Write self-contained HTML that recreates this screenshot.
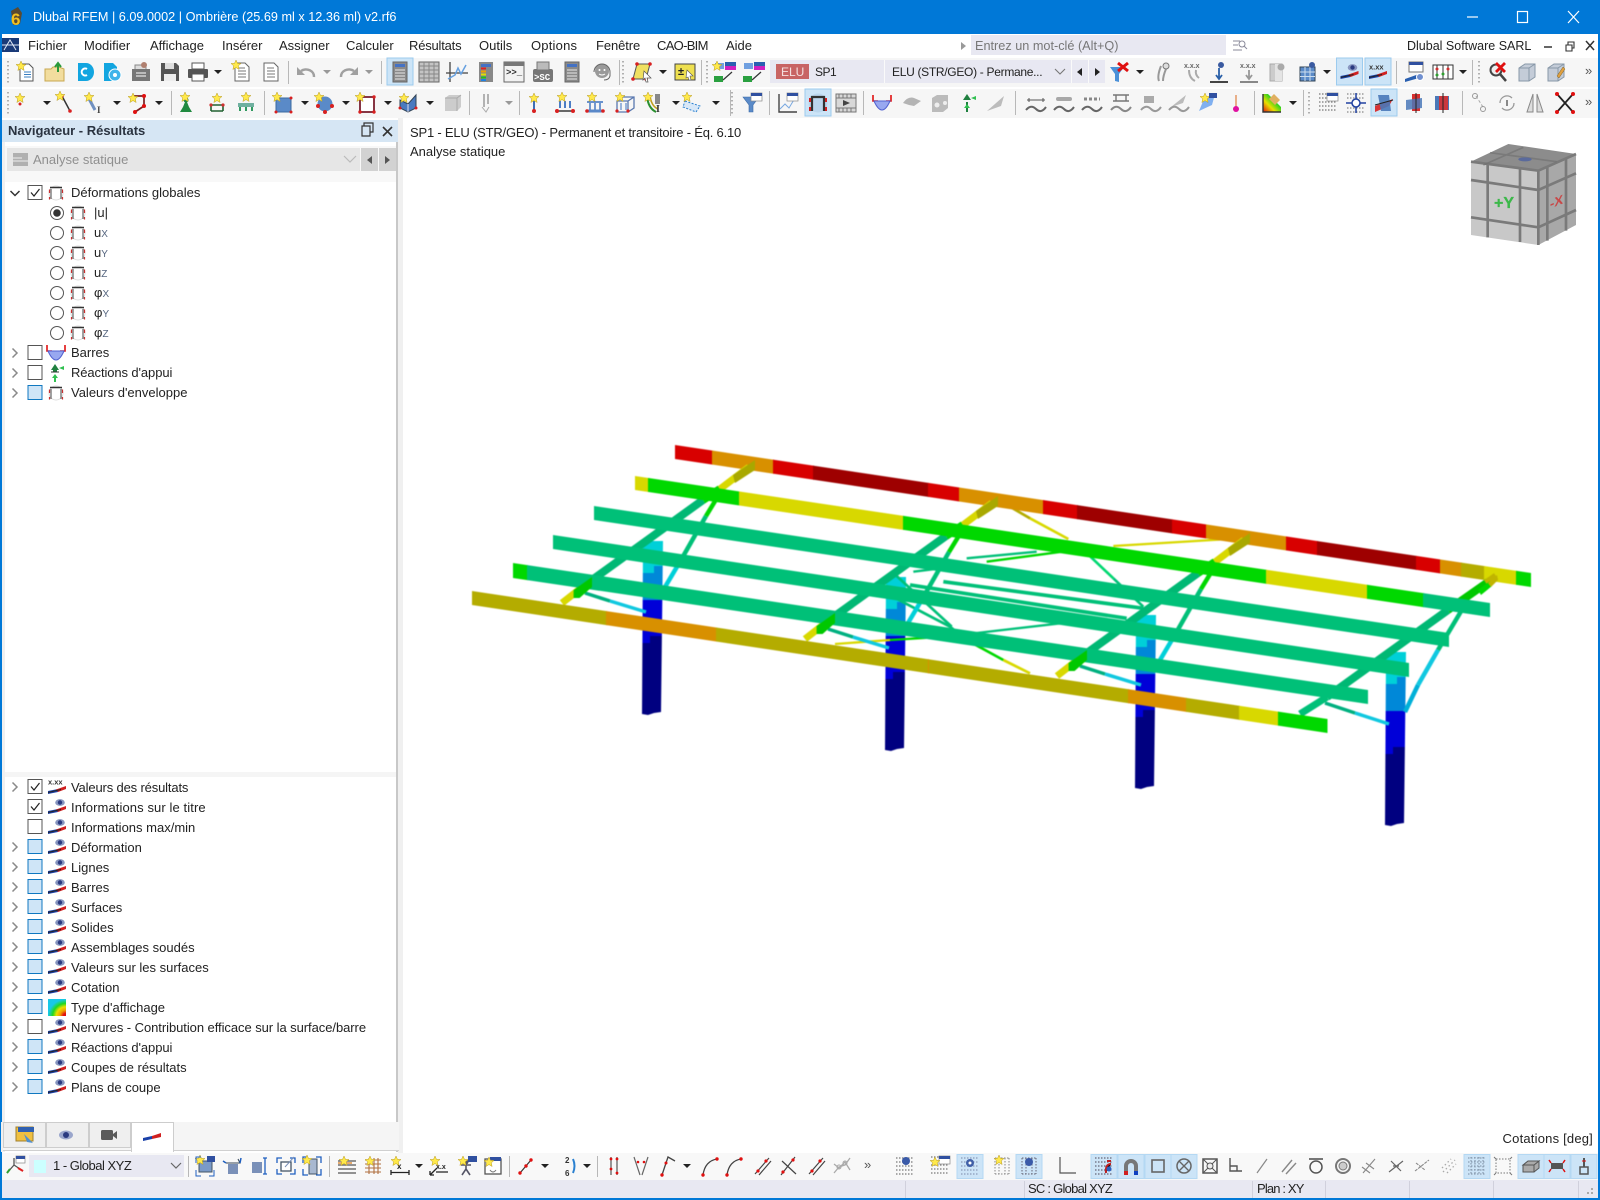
<!DOCTYPE html>
<html lang="fr"><head><meta charset="utf-8"><title>Dlubal RFEM</title>
<style>
html,body{margin:0;padding:0;width:1600px;height:1200px;overflow:hidden;background:#fff}
body{filter:blur(.25px)}
.a{position:absolute}
.t{position:absolute;font:13px/20px "Liberation Sans",sans-serif;color:#222;white-space:nowrap}
small{font-size:10px;color:#55657f}
.s rect{y:400px;height:400px}
</style></head><body>
<div class="a" style="left:0;top:0;width:1600px;height:1200px;background:#fff"></div>
<div class="a" style="left:0;top:0;width:1600px;height:34px;background:#0078d7"></div>
<div class="a" style="left:0;top:34px;width:2px;height:1166px;background:#0078d7"></div>
<div class="a" style="left:1598px;top:34px;width:2px;height:1166px;background:#0078d7"></div>
<div class="a" style="left:0;top:1198px;width:1600px;height:2px;background:#0078d7"></div>
<div class="a" style="left:2px;top:58px;width:1596px;height:29px;background:#f6f6f6"></div>
<div class="a" style="left:2px;top:89px;width:1596px;height:29px;background:#f6f6f6"></div>
<div class="a" style="left:971px;top:35px;width:255px;height:20px;background:#e8e8f2"></div>
<div class="a" style="left:770px;top:60px;width:335px;height:23px;background:#e8e8f2"></div>
<div class="a" style="left:776px;top:64px;width:33px;height:15px;background:#c86464"></div>
<div class="a" style="left:884px;top:60px;width:1px;height:23px;background:#fafafa"></div>
<div class="a" style="left:1071px;top:60px;width:1px;height:23px;background:#fafafa"></div>
<div class="a" style="left:1088px;top:60px;width:1px;height:23px;background:#fafafa"></div>
<!-- left panel -->
<div class="a" style="left:2px;top:120px;width:396px;height:22px;background:#d6e6f4"></div>
<div class="a" style="left:398px;top:118px;width:5px;height:1035px;background:#f0f0f0"></div>
<div class="a" style="left:2px;top:142px;width:3px;height:1010px;background:#f0f0f0"></div>
<div class="a" style="left:396px;top:142px;width:2px;height:1010px;background:#c8c8c8"></div>
<div class="a" style="left:5px;top:146px;width:391px;height:36px;background:#f8f8f8"></div>
<div class="a" style="left:7px;top:148px;width:353px;height:23px;background:#e6e6e6"></div>
<div class="a" style="left:361px;top:148px;width:17px;height:23px;background:#d2d2d2"></div>
<div class="a" style="left:379px;top:148px;width:17px;height:23px;background:#d2d2d2"></div>
<div class="a" style="left:5px;top:772px;width:391px;height:5px;background:#f5f5f5"></div>
<div class="a" style="left:3px;top:1122px;width:396px;height:29px;background:#f5f5f5;border-bottom:1px solid #d0d0d0;box-sizing:border-box"></div>
<div class="a" style="left:3px;top:1122px;width:43px;height:26px;background:#efefef;border:1px solid #cdcdcd;box-sizing:border-box"></div>
<div class="a" style="left:46px;top:1122px;width:43px;height:26px;background:#efefef;border:1px solid #cdcdcd;box-sizing:border-box"></div>
<div class="a" style="left:89px;top:1122px;width:42px;height:26px;background:#efefef;border:1px solid #cdcdcd;box-sizing:border-box"></div>
<div class="a" style="left:131px;top:1122px;width:43px;height:30px;background:#fff;border:1px solid #cdcdcd;border-bottom:0;box-sizing:border-box"></div>
<div class="a" style="left:1px;top:1122px;width:2px;height:30px;background:#f0f0f0"></div>
<!-- bottom -->
<div class="a" style="left:2px;top:1153px;width:1596px;height:27px;background:#f8f8f8"></div>
<div class="a" style="left:29px;top:1155px;width:155px;height:22px;background:#e8e8f2"></div>
<div class="a" style="left:34px;top:1160px;width:12px;height:13px;background:#ccffff"></div>
<div class="a" style="left:2px;top:1180px;width:1596px;height:18px;background:#e8e8f2"></div>

<svg class="a" style="left:0;top:0" width="1600" height="1200" viewBox="0 0 1600 1200" xmlns="http://www.w3.org/2000/svg">
<defs>
<radialGradient id="rain" cx="1" cy="1" r="1.2"><stop offset=".12" stop-color="#e01010"/><stop offset=".28" stop-color="#f0a000"/><stop offset=".45" stop-color="#e8e000"/><stop offset=".62" stop-color="#20d820"/><stop offset=".82" stop-color="#18c8e8"/></radialGradient>
<path id="st" d="M0-5 1.500-1.600 5-1.500 2.300.8 3.100 4.500 0 2.600-3.100 4.500-2.300.8-5-1.500-1.500-1.600z" fill="#ffe94a" stroke="#b89a20" stroke-width=".5"/>
<path id="dn" d="M-4-2H4L0 2z" fill="#222"/>
<path id="dg" d="M-4-2H4L0 2z" fill="#999"/>
<g id="ab"><rect x="-13" y="-14" width="26" height="27" fill="#cce4f7" stroke="#9ccbee"/></g>
<g id="abb"><rect x="-13" y="-12" width="26" height="24" fill="#cce4f7" stroke="#b4d8f3"/></g>
<g id="n1"><path d="M-6-8H3L7-4V9H-6z" fill="#fff" stroke="#555"/><path d="M-2 0H5M-2 2.500H5M-2 5H5" stroke="#3a7fc0"/><use href="#st" x="-5" y="-6"/></g>
<g id="op"><path d="M-10-3H-4L-2-5H4L9-3V9H-10z" fill="#f2dd9e" stroke="#c8a850"/><path d="M3 0V-8M0-5L3-9 6-5" stroke="#2a9a3a" stroke-width="2" fill="none"/></g>
<g id="cc"><path d="M-6-9H2A8 9 0 0 1 2 9H-6z" fill="#12a5e0"/><path d="M3-3A3.500 3.500 0 1 0 3 3" stroke="#fff" stroke-width="2" fill="none"/></g>
<g id="cg"><path d="M-8-9H1L5-5V9H-8z" fill="#12a5e0"/><circle cx="3" cy="3" r="6" fill="#3fb4ea" stroke="#fff"/><circle cx="3" cy="3" r="2" fill="#fff"/></g>
<g id="clp"><rect x="-9" y="-3" width="18" height="12" fill="#777"/><path d="M-6-3V-7H5V-3" fill="#ddd" stroke="#888"/><path d="M-5 1H5M-5 4H5" stroke="#fff"/><circle cx="3" cy="-7" r="3" fill="#b08070"/></g>
<g id="sv"><path d="M-9-9H6L9-6V9H-9z" fill="#555"/><rect x="-5" y="-9" width="9" height="6" fill="#ddd"/><rect x="-6" y="2" width="12" height="7" fill="#eee"/></g>
<g id="pr"><rect x="-6" y="-9" width="12" height="6" fill="#fff" stroke="#555"/><rect x="-10" y="-3" width="20" height="9" rx="1" fill="#555"/><rect x="-6" y="2" width="12" height="7" fill="#fff" stroke="#555"/></g>
<g id="dl"><path d="M-7-9H3L7-5V9H-7z" fill="#fff" stroke="#666"/><path d="M-4-4H3M-4-1H4M-4 2H4M-4 5H4" stroke="#777"/></g>
<g id="ds"><use href="#dl"/><use href="#st" x="-6" y="-7"/></g>
<g id="un"><path d="M8 5A8 7 0 0 0-5-1" stroke="#a0a0a0" stroke-width="2.500" fill="none"/><path d="M-9-5V3H-1z" fill="#a0a0a0"/></g>
<g id="re"><path d="M-8 5A8 7 0 0 1 5-1" stroke="#a0a0a0" stroke-width="2.500" fill="none"/><path d="M9-5V3H1z" fill="#a0a0a0"/></g>
<g id="nv"><rect x="-7" y="-10" width="14" height="20" fill="#8a8a8a" stroke="#666"/><rect x="-5" y="-8" width="10" height="3" fill="#4472c4"/><path d="M-5-2H5M-5 1H5M-5 4H5M-5 7H5" stroke="#e8e8e8"/></g>
<g id="tb"><rect x="-10" y="-10" width="20" height="20" fill="#c4c4c4" stroke="#666"/><path d="M-10-6H10M-10-2H10M-10 2H10M-10 6H10M-5-10V10M0-10V10M5-10V10" stroke="#888"/></g>
<g id="gr"><path d="M-7-10V10M-11 1H11" stroke="#444" stroke-width="1.300" fill="none"/><path d="M-9 7-2 3 1-4 4 2 9-7" stroke="#66a0e0" stroke-width="1.500" fill="none"/></g>
<g id="cl"><rect x="-7" y="-10" width="14" height="20" fill="#888"/><rect x="-5" y="-8" width="10" height="3" fill="#4472c4"/><path d="M-5-3.500H0" stroke="#e02020" stroke-width="2"/><path d="M-5-.5H0" stroke="#f0a000" stroke-width="2"/><path d="M-5 2.500H0" stroke="#e0e000" stroke-width="2"/><path d="M-5 5.500H0" stroke="#20c020" stroke-width="2"/><path d="M-5 8H0" stroke="#2080e0" stroke-width="2"/></g>
<g id="co"><rect x="-10" y="-10" width="20" height="20" fill="#f2f2f2" stroke="#666"/><rect x="-10" y="-10" width="20" height="4" fill="#777"/><text x="-8" y="3" font-family="Liberation Mono" font-size="9" font-weight="700" fill="#333">&gt;&gt;_</text></g>
<g id="sc"><rect x="-10" y="-3" width="20" height="13" rx="2" fill="#777"/><rect x="-6" y="-10" width="12" height="8" fill="#bbb" stroke="#777"/><text x="-9" y="8" font-family="Liberation Mono" font-size="9" font-weight="700" fill="#fff">&gt;SC</text></g>
<g id="hd"><circle cx="0" cy="-1" r="7" fill="#9a9a9a"/><circle cx="-2.500" cy="-2" r="1" fill="#fff"/><circle cx="2.500" cy="-2" r="1" fill="#fff"/><path d="M-3 2Q0 4 3 2" stroke="#fff" fill="none"/><path d="M-8 0A8 8 0 0 1 8 0M8 0V4Q7 8 2 8" stroke="#666" fill="none"/></g>
<g id="pa"><path d="M-6-8H7L3 7H-10z" fill="#f0e060" stroke="#555"/><g fill="#d82020"><circle cx="-6" cy="-8" r="1.800"/><circle cx="7" cy="-8" r="1.800"/><circle cx="3" cy="7" r="1.800"/><circle cx="-10" cy="7" r="1.800"/></g><path d="M1-1 8 6 4 6 5 10 3 10 2 6 0 8z" fill="#fff" stroke="#555" stroke-width=".7"/></g>
<g id="pm"><rect x="-10" y="-8" width="20" height="16" fill="#eee050" stroke="#444"/><text x="-7" y="3" font-family="Liberation Sans" font-size="11" font-weight="700" fill="#222">±</text><path d="M2-2 8 4H5L6 8 4 8 3 5 1 6z" fill="#fff" stroke="#555" stroke-width=".6"/></g>
<g id="c1"><rect x="-11" y="4" width="9" height="6" fill="#2aa040"/><rect x="0" y="-9" width="11" height="7" fill="#d020c0"/><rect x="0" y="-10" width="11" height="4" fill="#2a60b0"/><rect x="-10" y="-9" width="9" height="6" fill="#70a0e0"/><path d="M-2 8 7 0" stroke="#333" stroke-width="1.200"/><use href="#st" x="-8" y="-6"/></g>
<g id="c2"><rect x="-11" y="4" width="9" height="6" fill="#2aa040"/><rect x="0" y="-9" width="11" height="7" fill="#d020c0"/><rect x="0" y="-10" width="11" height="4" fill="#2a60b0"/><rect x="-10" y="-9" width="9" height="6" fill="#70a0e0"/><path d="M-2 8 7 0" stroke="#333" stroke-width="1.200"/></g>
<g id="fu"><path d="M-9-6H7L1 2V9L-3 9V2z" fill="#5a8ac8" stroke="#3a6aa8" stroke-width=".6"/><rect x="-1" y="-10" width="11" height="8" fill="#fff" stroke="#888" stroke-width=".7"/><rect x="-1" y="-10" width="11" height="3" fill="#3050a0"/></g>
<g id="fx"><path d="M-9-5H5L0 2V10L-4 9V2z" fill="#4a90d8"/><path d="M-1-9 9-1M9-9-1-1" stroke="#e01010" stroke-width="3"/></g>
<g id="gp"><path d="M-2-6 Q-6 4-4 9M3-3 Q0 4 0 9" stroke="#999" stroke-width="2" fill="none"/><circle cx="3" cy="-6" r="3" fill="#ddd" stroke="#777"/></g>
<g id="gx"><text x="-9" y="-4" font-family="Liberation Sans" font-size="7" font-weight="700" fill="#666">x.x.x</text><path d="M-4-2Q-4 6 2 9M3-2Q2 3 6 6" stroke="#aaa" stroke-width="2" fill="none"/></g>
<g id="la"><path d="M0-4V7M-3 3 0 7 3 3" stroke="#2a60a8" stroke-width="1.800" fill="none"/><path d="M-9 10H9" stroke="#444" stroke-width="2"/><circle cx="2" cy="-7" r="3" fill="#3a5aa0"/></g>
<g id="lx"><text x="-9" y="-4" font-family="Liberation Sans" font-size="7" font-weight="700" fill="#666">x.x.x</text><path d="M0-2V7M-3 3 0 7 3 3" stroke="#999" stroke-width="1.800" fill="none"/><path d="M-9 10H9" stroke="#888" stroke-width="2"/></g>
<g id="cy"><rect x="-7" y="-8" width="12" height="17" fill="#ccc" stroke="#aaa"/><rect x="-2" y="-8" width="7" height="17" fill="#e4e4e4"/><circle cx="4" cy="-5" r="3.500" fill="#aaa"/></g>
<g id="gb"><rect x="-8" y="-5" width="15" height="14" fill="#5a8ac8" stroke="#345"/><path d="M-8 0H7M-8 4.500H7M-3-5V9M2-5V9" stroke="#cde"/><circle cx="4" cy="-7" r="3" fill="#3a5aa0"/></g>
<g id="ey"><path d="M-9 4-9 7 1 5 1 2z" fill="#1a40a8"/><path d="M-1 2.500 1 5 9 2 9-1z" fill="#d02020"/><path d="M-9 5.500 4 2.500" stroke="#222" stroke-width=".9"/><ellipse cx="3" cy="-4.500" rx="4.800" ry="3.400" fill="#8896c0"/><circle cx="3" cy="-4.500" r="2.200" fill="#2a3a80"/></g>
<g id="xx"><path d="M-9 4-9 7 1 5 1 2z" fill="#1a40a8"/><path d="M-1 2.500 1 5 9 2 9-1z" fill="#d02020"/><path d="M-9 5.500 4 2.500" stroke="#222" stroke-width=".9"/><text x="-9" y="-2.500" font-family="Liberation Sans" font-size="7.500" font-weight="700" fill="#333">x.xx</text></g>
<g id="gw"><rect x="-6" y="-10" width="14" height="10" fill="#fff" stroke="#777"/><rect x="-6" y="-10" width="14" height="3" fill="#3050a0"/><path d="M-10 7 4 2V6L-10 10z" fill="#2a60b0"/><circle cx="5" cy="5" r="3.500" fill="#7090d0" stroke="#fff"/></g>
<g id="ac"><rect x="-10" y="-7" width="20" height="14" fill="#fff" stroke="#333"/><path d="M-6-7V7M0-7V7M5-7V7" stroke="#333"/><g fill="#d03030"><circle cx="-6" cy="-3" r="1.500"/><circle cx="5" cy="-3" r="1.500"/></g><g fill="#30a030"><circle cx="0" cy="2" r="1.500"/><circle cx="-6" cy="3" r="1.500"/></g></g>
<g id="mg"><circle cx="-2" cy="-2" r="5.500" fill="#eee" stroke="#444" stroke-width="2"/><path d="M2 2 8 9" stroke="#444" stroke-width="2.500"/><path d="M-2-9 7 0M7-9-2 0" stroke="#e01010" stroke-width="2.800"/></g>
<g id="cb"><path d="M-8-4-2-8H8V5L2 9H-8z" fill="#c4ccd8" stroke="#8898a8"/><path d="M-8-4H2V9M2-4 8-8" stroke="#8898a8" fill="none"/></g>
<g id="cp"><use href="#cb"/><path d="M1 4 7-5 9-3 3 6z" fill="#e0a040" stroke="#806020" stroke-width=".5"/></g>
<g id="sl"><path d="M-4-7 4 8" stroke="#333" stroke-width="1.500"/><circle cx="4" cy="8" r="1.800" fill="#d82020"/><circle cx="-4" cy="-7" r="1.800" fill="#d82020"/><use href="#st" x="-6" y="-7"/></g>
<g id="sn"><use href="#st" x="-2" y="-5"/><circle cx="-2" cy="1" r="1.500" fill="#d82020"/></g>
<g id="sb"><path d="M-7-8 1 7" stroke="#7090c0" stroke-width="3"/><use href="#st" x="-5" y="-6"/><text x="3" y="10" font-family="Liberation Serif" font-size="9" font-weight="700" fill="#444">I</text></g>
<g id="po"><path d="M-5-7H6V3L-3 9" stroke="#7a2020" stroke-width="1.700" fill="none"/><g fill="#e01010"><circle cx="6" cy="-7" r="2"/><circle cx="6" cy="3" r="2"/><circle cx="-3" cy="9" r="2"/></g><use href="#st" x="-5" y="-5"/></g>
<g id="ng"><path d="M-6 9H6L3 4 1-1H-1L-3 4z" fill="#208a40"/><circle cx="0" cy="-3" r="2.500" fill="#208a40"/><use href="#st" x="-1" y="-6"/></g>
<g id="ns"><path d="M-7 2H7M-6 2V8M6 2V8M-6 8H6" stroke="#206030" stroke-width="1.600" fill="none"/><g fill="#d03030"><circle cx="-6" cy="2" r="1.600"/><circle cx="6" cy="2" r="1.600"/></g><use href="#st" x="0" y="-5"/></g>
<g id="nt"><path d="M-8 0H8V4H-8z" fill="#70b0a0"/><path d="M-6 4V8M0 4V8M6 4V8" stroke="#309a60" stroke-width="2"/><use href="#st" x="0" y="-6"/></g>
<g id="bs"><rect x="-7" y="-5" width="15" height="14" fill="#5a8ac8" stroke="#3a6aa0"/><use href="#st" x="-6" y="-6"/><g fill="#d82020"><circle cx="8" cy="-5" r="1.500"/><circle cx="8" cy="9" r="1.500"/><circle cx="-7" cy="9" r="1.500"/></g></g>
<g id="bl"><circle cx="1" cy="1" r="7.500" fill="#5a8ac8"/><use href="#st" x="-5" y="-6"/><g fill="#d82020"><circle cx="-6" cy="3" r="2"/><circle cx="8" cy="3" r="2"/><circle cx="1" cy="9" r="2"/></g></g>
<g id="bx"><rect x="-6" y="-6" width="14" height="15" fill="#fff" stroke="#7a2030" stroke-width="1.800"/><use href="#st" x="-6" y="-6"/><g fill="#d82020"><circle cx="8" cy="-6" r="1.700"/><circle cx="8" cy="9" r="1.700"/><circle cx="-6" cy="9" r="1.700"/></g></g>
<g id="bk"><path d="M-8-3 0 1 8-8V5L0 9-8 5z" fill="#4a7ac0" stroke="#345"/><path d="M0 1V9" stroke="#dde"/><use href="#st" x="-4" y="-5"/><circle cx="8" cy="5" r="1.500" fill="#d82020"/><circle cx="-8" cy="5" r="1.500" fill="#d82020"/></g>
<g id="gc"><path d="M-7-5V8H5L9 4V-8H-3z" fill="#ccc"/><path d="M-7-5H5V8M5-5 9-8" stroke="#aaa" fill="none"/></g>
<g id="gl"><path d="M-1-9V4M3-9V1" stroke="#aaa" stroke-width="1.800"/><path d="M-3 4 1 9 4 4" stroke="#aaa" fill="none"/></g>
<g id="sp"><path d="M0-2V8" stroke="#2a60b0" stroke-width="1.800"/><use href="#st" x="0" y="-5"/><circle cx="0" cy="8" r="2" fill="#d82020"/></g>
<g id="ld"><path d="M-5-2V5M0-2V5M5-2V5" stroke="#3a70c0" stroke-width="1.800"/><path d="M-8 8H8" stroke="#444" stroke-width="1.600"/><circle cx="-8" cy="8" r="2" fill="#d82020"/><circle cx="8" cy="8" r="2" fill="#d82020"/><use href="#st" x="-3" y="-6"/></g>
<g id="lf"><path d="M-8-1H8M-5 0V7M0 0V7M5 0V7" stroke="#3a70c0" stroke-width="1.400"/><path d="M-9 8H9" stroke="#5a88c8" stroke-width="3"/><circle cx="-8" cy="8" r="1.800" fill="#d82020"/><circle cx="8" cy="8" r="1.800" fill="#d82020"/><use href="#st" x="-3" y="-6"/></g>
<g id="l3"><path d="M-8 8V-2L-2-6H9V5L3 9H-8zM-8-2H3V9M3-2 9-6" stroke="#5a78b0" fill="none" stroke-width="1.300"/><path d="M-4 0V7M1 0V7" stroke="#3a70c0"/><use href="#st" x="-5" y="-6"/><circle cx="-8" cy="8" r="1.600" fill="#d82020"/><circle cx="3" cy="8" r="1.600" fill="#d82020"/></g>
<g id="ci"><path d="M-6-7Q-5 5 3 9" stroke="#2a9030" stroke-width="2" fill="none"/><path d="M-3-8Q-2 3 5 6" stroke="#c0a020" stroke-width="1.500" fill="none"/><text x="3" y="9" font-family="Liberation Serif" font-size="10" font-weight="700" fill="#333">I</text><use href="#st" x="-5" y="-6"/><rect x="2" y="-9" width="5" height="10" fill="#888"/></g>
<g id="dq"><path d="M-6-2 9 3 5 9-8 4z" fill="#d8e8f8" stroke="#2a80d0" stroke-dasharray="2 1.500"/><use href="#st" x="-4" y="-6"/></g>
<g id="gw2"><path d="M-9-9V9H9" stroke="#444" stroke-width="1.400" fill="none"/><path d="M-8 6-3 1 1 5 7-5" stroke="#78a8e0" fill="none"/><rect x="-1" y="-10" width="11" height="8" fill="#fff" stroke="#888" stroke-width=".7"/><rect x="-1" y="-10" width="11" height="3" fill="#3050a0"/></g>
<g id="fr"><circle r="7" fill="none" stroke="#ddd" stroke-width="1"/><path d="M-5 6V-4M5 6V-4" fill="none" stroke="#555" stroke-width="1.100"/><path d="M-6.500-3.500V0M6.500-3.500V0M-6.500 4V6.500M6.500 4V6.500" stroke="#c83030" stroke-width="1.200"/><path d="M-6-5.500H6" stroke="#333" stroke-width="1.500"/></g>
<g id="fa"><circle cx="0" cy="0" r="9.500" fill="#b4d0e8" opacity=".7"/><path d="M-6 8V-6H6V8" fill="none" stroke="#333" stroke-width="2.200"/><path d="M-8-5V-1M8-5V-1M-8 4V8M8 4V8" stroke="#d02020" stroke-width="2"/></g>
<g id="fm"><rect x="-10" y="-9" width="20" height="18" fill="#d8d8d8" stroke="#777"/><path d="M-10-5H10M-10 5H10M-7-9V-5M-3-9V-5M1-9V-5M5-9V-5M-7 5V9M-3 5V9M1 5V9M5 5V9" stroke="#777"/><path d="M-3-3 4 0-3 3z" fill="#444"/></g>
<g id="br"><path d="M-9-8V-2H-4M9-8V-2H4" stroke="#e01010" stroke-width="1.600" fill="none"/><path d="M-8-2Q0 16 8-2z" fill="#98a8f0" stroke="#5060d0"/></g>
<g id="rc"><path d="M-1-9-5-3H-3V-1H1V-3H3z" fill="#208040"/><path d="M-1 1 -4 5H-2V9H0V5H2z" fill="#30c050"/><path d="M8-7 3-5 8-3z" fill="#30c050"/><path d="M-5-1H3" stroke="#333"/></g>
<g id="gb2"><path d="M-9 0Q-4-7 2-5L9-2 2 3Q-4 2-9 0z" fill="#b4b4b4"/></g>
<g id="gd"><path d="M-8-5-3-8H8V5L3 9H-8z" fill="#bbb"/><circle cx="-3" cy="2" r="2.500" fill="#eee"/><circle cx="5" cy="0" r="2" fill="#eee"/></g>
<g id="rc2"><path d="M-1-9-5-3H3z" fill="#208040"/><path d="M-1-1-1 9" stroke="#208040" stroke-width="2"/><path d="M-4 5-1 1 2 5z" fill="#30c050"/><path d="M8-7 3-5 8-3z" fill="#30c050"/></g>
<g id="gy"><path d="M-9 8 8-7 5 3z" fill="#bcbcbc"/></g>
<g id="w1"><path d="M-9-3H9" stroke="#555"/><path d="M-7-5V-1M7-5V-1" stroke="#555"/><path d="M-10 7Q-5 1 0 6T10 4" stroke="#666" stroke-width="2" fill="none"/></g>
<g id="w2"><rect x="-8" y="-6" width="16" height="4" rx="2" fill="#a8a8a8"/><path d="M-10 7Q-5 1 0 6T10 4" stroke="#666" stroke-width="2" fill="none"/></g>
<g id="w3"><path d="M-8-4H8" stroke="#888" stroke-width="3" stroke-dasharray="3 2"/><path d="M-10 7Q-5 1 0 6T10 4" stroke="#666" stroke-width="2" fill="none"/></g>
<g id="w4"><path d="M-8-8H8M-5-8V-2M5-8V-2M-8-2H8" stroke="#777" stroke-width="1.400" fill="none"/><path d="M-10 7Q-5 1 0 6T10 4" stroke="#888" stroke-width="2" fill="none"/></g>
<g id="w5"><path d="M-7-7H3V0H-7z" fill="#aaa"/><path d="M-10 7Q-5 1 0 6T10 4" stroke="#999" stroke-width="2" fill="none"/></g>
<g id="w6"><path d="M-8 4 7-8 4 0z" fill="#bbb"/><path d="M-10 7Q-5 1 0 6T10 4" stroke="#999" stroke-width="2" fill="none"/></g>
<g id="sw"><path d="M-8 8-3-4 8-9 5 2z" fill="#80b0f0"/><use href="#st" x="-2" y="-5"/><rect x="2" y="-10" width="8" height="5" fill="#3050a0"/></g>
<g id="pn"><path d="M0-8V5" stroke="#e08040" stroke-width="1.200"/><circle cx="0" cy="6" r="3" fill="#e010a0"/></g>
<g id="ra"><path d="M-9-9H-4L9 4V9H-9z" fill="url(#rain2)"/><path d="M-9-9V9H9" stroke="#333" stroke-width="1.400" fill="none"/><path d="M2-9 8-3 3 2-3-4z" fill="#e0b060"/></g>
<linearGradient id="rain2" x1="0" y1="1" x2="1" y2="0"><stop offset="0" stop-color="#e01010"/><stop offset=".35" stop-color="#e8e000"/><stop offset=".65" stop-color="#20d020"/><stop offset="1" stop-color="#18c8e8"/></linearGradient>
<g id="dg1"><path d="M-9-9H9M-9-5H9M-9-1H9M-9 3H9M-9 7H9" stroke="#777" stroke-width="1.300" stroke-dasharray="1.500 1.500"/><rect x="-1" y="-10" width="11" height="8" fill="#fff" stroke="#888" stroke-width=".7"/><rect x="-1" y="-10" width="11" height="3" fill="#3050a0"/></g>
<g id="tg"><path d="M-9-9H9M-9-5H9M-9 5H9M-9 9H9" stroke="#888" stroke-width="1.300" stroke-dasharray="1.500 1.500"/><path d="M0-10V10M-10 0H10" stroke="#2040a0" stroke-width="1.500"/><circle r="4" fill="#fff" stroke="#2040a0" stroke-width="1.500"/></g>
<g id="p1"><path d="M-9 3 9-4 5 3-9 9z" fill="#d82020" opacity=".9"/><path d="M-6-8 5-8 7 8-3 8z" fill="#4a78b8" opacity=".9"/><path d="M-9 2 9-3" stroke="#222"/></g>
<g id="p2"><path d="M-2-9H6V8H-2z" fill="#d83030"/><path d="M-8-3 8-5 8 5-8 7z" fill="#4a78b8" opacity=".85"/><path d="M2-10V10" stroke="#222"/></g>
<g id="p3"><rect x="-8" y="-7" width="14" height="14" fill="#4a78b8"/><rect x="-4" y="-7" width="9" height="14" fill="#d83030" opacity=".9"/><path d="M0-10V10" stroke="#222"/></g>
<g id="gn"><path d="M-3-7 4 4" stroke="#aaa" stroke-dasharray="3 2"/><circle cx="-4" cy="-7" r="2.500" fill="none" stroke="#999"/><circle cx="4" cy="6" r="2.500" fill="none" stroke="#999"/></g>
<g id="gr2"><path d="M-7 0A7 7 0 0 1 5-5M7 0A7 7 0 0 1-5 5" stroke="#999" fill="none" stroke-width="1.300"/><rect x="-1" y="-3" width="2" height="6" fill="#888"/></g>
<g id="gt"><path d="M-2-9-8 9H-2zM2-9 8 9H2z" fill="#ddd" stroke="#888"/></g>
<g id="xr"><path d="M-8-9 8 9M8-9-8 9" stroke="#222" stroke-width="1.800"/><g fill="#e01010"><circle cx="-8" cy="-9" r="2"/><circle cx="8" cy="-9" r="2"/><circle cx="-8" cy="9" r="2"/><circle cx="8" cy="9" r="2"/></g></g>
<g id="ax"><path d="M-1-1-8 7M-1-1 8 5M-1-1-1-8" stroke="#555" stroke-width="1.300"/><path d="M-8 7-5 3" stroke="#30a030" stroke-width="2"/><path d="M8 5 3 2" stroke="#e02020" stroke-width="2"/><rect x="1" y="-10" width="9" height="7" fill="#fff" stroke="#888" stroke-width=".7"/><rect x="1" y="-10" width="9" height="3" fill="#3050a0"/></g>
<g id="q1"><rect x="-6" y="-5" width="13" height="11" fill="#7a9ac8" stroke="#456"/><rect x="2" y="-10" width="8" height="6" fill="#3050a0"/><use href="#st" x="-5" y="-6"/><path d="M-9-3V-9H-4M-9 4V10H-4M9 4V10H4" stroke="#2060c0" fill="none"/></g>
<g id="q2"><path d="M-4-2H6V8H-4z" fill="#7a90b8"/><path d="M-6-3H8L6-7" stroke="#345" fill="none"/><path d="M-9-5-6-3M9-8 8-3" stroke="#2060c0" stroke-width="1.500"/></g>
<g id="q3"><path d="M-6-4H4V7H-6z" fill="#7a90b8"/><path d="M7-8V8M5-8H9M5 8H9" stroke="#2060c0" stroke-width="1.300"/></g>
<g id="q4"><rect x="-5" y="-4" width="10" height="9" fill="#fff" stroke="#456" stroke-width="1.300"/><path d="M-9-3V-8H-4M4-8H9V-3M-9 3V8H-4M9 3V8H4" stroke="#2060c0" stroke-width="1.300" fill="none"/><path d="M-1 1 8-9" stroke="#7a90b8"/></g>
<g id="q5"><rect x="-3" y="-7" width="8" height="15" fill="#a8b8d0" stroke="#456"/><path d="M-9-3V-9H-4M4-9H9V-3M-9 3V9H-4M9 3V9H4" stroke="#2060c0" stroke-width="1.300" fill="none"/><use href="#st" x="-5" y="-6"/></g>
<g id="h1"><path d="M-9-5H9M-9-1H9M-9 3H9M-9 7H9" stroke="#555" stroke-width="1.300"/><path d="M-9-3H5" stroke="#e09040" stroke-width="1.500"/><use href="#st" x="-3" y="-5"/></g>
<g id="h2"><path d="M-8-6H8M-8-2H8M-8 2H8M-8 6H8M-4-8V8M1-8V8M5-8V8" stroke="#b07040" stroke-width="1.100"/><use href="#st" x="-3" y="-5"/></g>
<g id="h3"><path d="M-9 4V9M9 4V9M-9 6.500H9" stroke="#222" stroke-width="1.300"/><text x="-3" y="3" font-family="Liberation Sans" font-size="8" font-weight="700" fill="#222">x</text><use href="#st" x="-4" y="-5"/></g>
<g id="h4"><path d="M-9 9 -2 2M-9 9V5M-9 9H-5M-3 6H9" stroke="#222" stroke-width="1.300" fill="none"/><text x="-3" y="3" font-family="Liberation Sans" font-size="7" font-weight="700" fill="#222">x.x</text><use href="#st" x="-4" y="-5"/></g>
<g id="h5"><circle cx="-1" cy="-4" r="2.500" fill="#556"/><path d="M-1-2V3L-5 9M-1 3 3 9M-6-1H4" stroke="#556" stroke-width="1.600" fill="none"/><use href="#st" x="-4" y="-5"/><rect x="1" y="-10" width="9" height="6" fill="#3050a0"/></g>
<g id="h6"><rect x="-8" y="-7" width="16" height="15" fill="#fff" stroke="#555" stroke-width="1.300"/><rect x="-3" y="-9" width="11" height="4" fill="#3050a0"/><use href="#st" x="-4" y="-4"/><path d="M-3 4Q0 8 3 4" stroke="#777" fill="none"/></g>
<g id="d1"><path d="M-6 7 5-6" stroke="#333" stroke-width="1.200"/><g fill="#e01010"><circle cx="-6" cy="7" r="1.700"/><circle cx="0" cy="0" r="1.700"/><circle cx="5" cy="-6" r="1.700"/></g></g>
<g id="d2"><text x="-3" y="-3" font-family="Liberation Sans" font-size="8" font-weight="700" fill="#333">2</text><text x="-3" y="10" font-family="Liberation Sans" font-size="8" font-weight="700" fill="#333">6</text><path d="M5-7Q8 0 5 7" stroke="#2a80d0" stroke-width="2" fill="none"/></g>
<g id="l1"><path d="M-3-9V9M3-9V9" stroke="#555" stroke-width="1.200"/><circle cx="-3" cy="-7" r="1.400" fill="#e01010"/><circle cx="3" cy="-7" r="1.400" fill="#e01010"/><circle cx="-3" cy="3" r="1.400" fill="#e01010"/><circle cx="3" cy="7" r="1.400" fill="#e01010"/></g>
<g id="l2"><path d="M-7-9-1 9M7-9 1 9" stroke="#666" stroke-width="1.200"/><circle cx="-3" cy="-4" r="1.300" fill="#e01010"/><circle cx="3" cy="-4" r="1.300" fill="#e01010"/></g>
<g id="l4"><path d="M-6 9 0-9 7-5" stroke="#444" stroke-width="1.300" fill="none"/><circle cx="-6" cy="9" r="1.700" fill="#e01010"/><circle cx="-2" cy="-3" r="1.500" fill="#e01010"/></g>
<g id="l5"><path d="M-7 9Q-5-5 7-7" stroke="#444" stroke-width="1.300" fill="none"/><circle cx="-7" cy="9" r="1.700" fill="#e01010"/><circle cx="7" cy="-7" r="1.700" fill="#e01010"/></g>
<g id="l6"><path d="M-7 8 7-8M-3 9 9-5" stroke="#444" stroke-width="1.200"/><circle cx="-4" cy="5" r="1.600" fill="#e01010"/><circle cx="4" cy="-5" r="1.600" fill="#e01010"/></g>
<g id="l7"><path d="M-7 9 7-9M-6-5 8 8" stroke="#444" stroke-width="1.200"/><circle cx="-5" cy="6" r="1.600" fill="#e01010"/><circle cx="5" cy="-6" r="1.600" fill="#e01010"/></g>
<g id="l8"><path d="M-8 7-3 1 3-1 8-8M-8-2-3 2 3-4 8 4" stroke="#aaa" stroke-width="1.300" fill="none"/><circle cx="-3" cy="1" r="2" fill="none" stroke="#aaa"/><circle cx="3" cy="-3" r="2" fill="none" stroke="#aaa"/></g>
<g id="gg"><path d="M-9-8H9M-9-4H9M-9 0H9M-9 4H9M-9 8H9" stroke="#777" stroke-width="1.300" stroke-dasharray="1.500 1.500"/><circle cx="1" cy="-5" r="4" fill="#3a5aa8"/></g>
<g id="gs"><use href="#dg1"/><use href="#st" x="-5" y="-4"/></g>
<g id="gu"><path d="M-9-8H9M-9-4H9M-9 0H9M-9 4H9M-9 8H9" stroke="#8a9ab8" stroke-width="1.300" stroke-dasharray="1.500 1.500"/><circle cx="0" cy="-3" r="4" fill="#4060a8"/><circle cx="0" cy="-3" r="1.500" fill="#fff"/></g>
<g id="gv"><path d="M-7-8V8M7-8V8M-7-8H7M-7 8H7M-3-8V8M3-8V8" stroke="#888" stroke-dasharray="1.500 1.500"/><use href="#st" x="-3" y="-6"/></g>
<g id="gz"><path d="M-7-8V8M7-8V8M-7-8H7M-7 8H7M-3-8V8M3-8V8" stroke="#667" stroke-dasharray="1.500 1.500"/><circle cx="0" cy="-4" r="4" fill="#3a5aa8"/></g>
<path id="aL" d="M-7-9V7H9" stroke="#555" fill="none" stroke-width="1.200"/>
<g id="mA"><path d="M-9-8H9M-9-4H9M-9 0H9M-9 4H9M-9 8H9" stroke="#667" stroke-width="1.300" stroke-dasharray="1.500 1.500"/><path d="M2 7Q1-2 7-2 M3-5H7" stroke="#c02020" stroke-width="2"/><circle cx="5" cy="3" r="2.500" fill="#2a60c0"/></g>
<g id="mB"><path d="M-7 6V0A7 7 0 0 1 7 0V6H3V0A3 3 0 0 0-3 0V6z" fill="#777"/><rect x="-7" y="5" width="4" height="4" fill="#d02020"/><rect x="3" y="5" width="4" height="4" fill="#1040c0"/></g>
<rect id="mC" x="-6" y="-6" width="12" height="12" fill="none" stroke="#666" stroke-width="1.600"/>
<g id="mD"><circle r="7" fill="none" stroke="#666" stroke-width="1.500"/><path d="M-5-5 5 5M5-5-5 5" stroke="#666" stroke-width="1.400"/></g>
<g id="mE"><rect x="-7" y="-7" width="14" height="14" fill="none" stroke="#555" stroke-width="1.500"/><path d="M-7-7 7 7M7-7-7 7" stroke="#555"/><circle r="3" fill="#eee" stroke="#555"/></g>
<path id="mF" d="M-5-8V5H7M-5 0H2V5" fill="none" stroke="#555" stroke-width="1.400"/>
<path id="mG" d="M-5 7 5-7" stroke="#888" stroke-width="1.200"/>
<path id="mH" d="M-7 6 3-6M-3 8 7-3" stroke="#888" stroke-width="1.400"/>
<g id="mI"><path d="M-7-7H7" stroke="#555" stroke-width="1.600"/><circle cy="1" r="6" fill="none" stroke="#555" stroke-width="1.500"/></g>
<g id="mJ"><circle r="7" fill="none" stroke="#777" stroke-width="2"/><circle r="4" fill="#ccc" stroke="#777"/></g>
<path id="mK" d="M-6 7 6-7M-7 1 1 7M-3-3 5 3" stroke="#888" stroke-width="1.100"/>
<path id="mL" d="M-7 6 7-5M-5-5 5 5M-3 0 3 0" stroke="#666" stroke-width="1.200"/>
<path id="mM" d="M-7 5 7-6M-6-3 3 4" stroke="#888" stroke-width="1.100" stroke-dasharray="3 1"/>
<path id="mN" d="M-6 6 6-6M-2 7 7-2M-7 2 2-7" stroke="#aaa" stroke-width="1.300" stroke-dasharray="1.500 2.500"/>
<g id="mO"><path d="M-9-8H9M-9-4H9M-9 0H9M-9 4H9M-9 8H9M-6-9V9M-2-9V9M2-9V9M6-9V9" stroke="#7a8ca0" stroke-dasharray="1.500 1.500"/></g>
<g id="mP"><rect x="-7" y="-7" width="14" height="14" fill="none" stroke="#777" stroke-dasharray="1.500 1.500"/><path d="M-9-9-7-7M9-9 7-7M-9 9-7 7M9 9 7 7" stroke="#777"/></g>
<path id="mQ" d="M-8-1-3-5H8L3-1zM-8-1H3V6H-8zM3-1 8-5V2L3 6" fill="#aaa" stroke="#555"/>
<g id="mR"><rect x="-6" y="-3" width="12" height="6" fill="#555"/><path d="M-8-6-6-3M8-6 6-3M-8 6-6 3M8 6 6 3" stroke="#e01010" stroke-width="1.500"/></g>
<g id="mS"><path d="M0-8V1" stroke="#555" stroke-width="2"/><rect x="-4" y="1" width="8" height="7" fill="none" stroke="#555" stroke-width="1.500"/><path d="M-2-5H2" stroke="#e01010"/></g>
<g id="c0"><rect x="-7" y="-7.500" width="14" height="14" fill="#fff" stroke="#555"/></g>
<g id="c1b"><rect x="-7" y="-7.500" width="14" height="14" fill="#cfe5f7" stroke="#1078c0"/></g>
<g id="c2k"><use href="#c0"/><path d="M-4-.5-1 3 4.500-4" stroke="#222" stroke-width="1.200" fill="none"/></g>
<path id="chr" d="M-2.500-4.500 2 0-2.500 4.500" fill="none" stroke="#8a8a8a" stroke-width="1.500"/>
<path id="chd" d="M-4.500-2 0 2.500 4.500-2" fill="none" stroke="#333" stroke-width="1.500"/>
<circle id="ro" r="6.500" fill="#fff" stroke="#555"/>
<!-- structure -->
<clipPath id="ca"><polygon points="675,445 1531,573 1531,587 675,459"/></clipPath>
<clipPath id="cb2"><polygon points="635,476 1490,603 1490,617 635,490"/></clipPath>
<clipPath id="ce"><polygon points="513,563 1368,690 1368,704 513,578"/></clipPath>
<clipPath id="cf"><polygon points="472,591 1327.500,719 1327.500,733 472,605"/></clipPath>
<clipPath id="cc1"><polygon points="643,541 663,541 661,712 654,713 648,715 642,714"/></clipPath>
<g id="column"><g clip-path="url(#cc1)">
<rect x="640" y="530" width="26" height="43" fill="#00d0d8"/>
<rect x="640" y="573" width="26" height="28" fill="#0088d8"/>
<rect x="654" y="566" width="12" height="10" fill="#0088d8"/>
<rect x="640" y="600" width="26" height="43" fill="#0000d8"/>
<rect x="640" y="643" width="26" height="80" fill="#000080"/>
<rect x="650" y="636" width="16" height="8" fill="#000080"/>
</g></g>
<g id="rafter" fill="none" stroke-linecap="butt">
<path d="M665 587 681 560" stroke="#00d0d8" stroke-width="4.500"/>
<path d="M681 560 706 516" stroke="#00c078" stroke-width="4.500"/>
<path d="M706 516 720 493" stroke="#00d800" stroke-width="4.500"/>
<path d="M585 593 610 601" stroke="#00b080" stroke-width="3.500"/>
<path d="M610 601 646 612" stroke="#10c8e0" stroke-width="3.500"/>
<path d="M562 603 585 585" stroke="#d8d800" stroke-width="7"/>
<path d="M585 585 703 500" stroke="#00b874" stroke-width="8"/>
<path d="M703 500 720 489" stroke="#00d800" stroke-width="8"/>
<path d="M720 489 749 467" stroke="#d8d800" stroke-width="7"/>
</g>
<g id="plates">
<path d="M573.600 590 592 577 592 587 579.600 598 573.600 598z" fill="#00c800"/>
<path d="M733 475 755 460 755 470 735 483z" fill="#a8a800"/>
</g>
</defs>

<!-- titlebar icon -->
<path d="M11 11 18 7 22 13 20 24 13 25z" fill="#5a4a30"/>
<text x="11" y="25" font-family="Liberation Sans" font-size="17" font-weight="700" fill="#f2c020">6</text>
<!-- window buttons -->
<path d="M1467 17H1478" stroke="#fff" stroke-width="1.200"/>
<rect x="1517.500" y="11.500" width="10" height="11" fill="none" stroke="#fff" stroke-width="1.200"/>
<path d="M1568 11 1579 23M1579 11 1568 23" stroke="#fff" stroke-width="1.200"/>
<!-- menu icon -->
<rect x="2" y="38" width="17" height="14" fill="#1a3a78"/><path d="M2 45H19M4 50 10 40 16 50" stroke="#dfe7f4" fill="none"/>
<path d="M961 42 966 46 961 50z" fill="#999"/>
<path d="M1233 41H1240M1233 45H1238M1233 50H1242" stroke="#8a8a9a"/><circle cx="1242" cy="44" r="3" fill="none" stroke="#8a8a9a"/><path d="M1244 46 1247 49" stroke="#8a8a9a"/>
<path d="M1544 47H1552" stroke="#333" stroke-width="1.500"/>
<path d="M1566 45V51H1572V45zM1568 45V42H1574V48H1572" fill="none" stroke="#333" stroke-width="1.100"/>
<path d="M1586 41 1594 50M1594 41 1586 50" stroke="#333" stroke-width="1.500"/>
<!-- separators + grips -->
<path stroke="#b8b8b8" d="M288.500 61V84M381.500 61V84M619.500 60V85M701.500 60V85M1396.500 61V84M1472.500 60V85M171.500 91V115M264.500 91V115M469.500 91V115M519.500 91V115M730.500 90V116M769.500 91V115M863.500 91V115M1015.500 91V115M1254.500 91V115M1303.500 90V116M1462.500 91V115"/>
<path stroke="#999" stroke-width="1.500" stroke-dasharray="1.500 2.500" d="M8 61V84M8 92V115M623 61V84M707 61V84M732 92V115M1309 92V115M1479 61V84"/>
<!-- active boxes -->
<use href="#ab" x="400" y="72"/><use href="#ab" x="1349.500" y="72"/><use href="#ab" x="1378" y="72"/><use href="#ab" x="818" y="103"/><use href="#ab" x="1384" y="103"/>
<!-- row 1 -->
<use href="#n1" x="26" y="72"/><use href="#op" x="55" y="72"/><use href="#cc" x="84" y="72"/><use href="#cg" x="112" y="72"/><use href="#clp" x="141" y="72"/><use href="#sv" x="170" y="72"/><use href="#pr" x="198" y="72"/><use href="#dn" x="218" y="72"/><use href="#ds" x="242" y="72"/><use href="#dl" x="271" y="72"/><use href="#un" x="306" y="72"/><use href="#dg" x="327" y="72"/><use href="#re" x="349" y="72"/><use href="#dg" x="369" y="72"/><use href="#nv" x="400" y="72"/><use href="#tb" x="429" y="72"/><use href="#gr" x="457" y="72"/><use href="#cl" x="486" y="72"/><use href="#co" x="514" y="72"/><use href="#sc" x="543" y="72"/><use href="#nv" x="572" y="72"/><use href="#hd" x="602" y="72"/><use href="#pa" x="643" y="72"/><use href="#dn" x="663" y="72"/><use href="#pm" x="685" y="72"/><use href="#c1" x="725" y="72"/><use href="#c2" x="754" y="72"/>
<path d="M1082 68 1077 72 1082 76z" fill="#222"/><path d="M1095 68 1100 72 1095 76z" fill="#222"/>
<path d="M1055 69 1060 74 1065 69" fill="none" stroke="#777" stroke-width="1.100"/>
<use href="#fx" x="1119" y="72"/><use href="#dn" x="1140" y="72"/><use href="#gp" x="1163" y="72"/><use href="#gx" x="1193" y="72"/><use href="#la" x="1219" y="72"/><use href="#lx" x="1249" y="72"/><use href="#cy" x="1277" y="72"/><use href="#gb" x="1308" y="72"/><use href="#dn" x="1327" y="72"/><use href="#ey" x="1349.500" y="72"/><use href="#xx" x="1378" y="72"/><use href="#gw" x="1415" y="72"/><use href="#ac" x="1443" y="72"/><use href="#dn" x="1463" y="72"/><use href="#mg" x="1498" y="72"/><use href="#cb" x="1527" y="72"/><use href="#cp" x="1556" y="72"/>
<!-- row 2 -->
<use href="#sn" x="22" y="103"/><use href="#dn" x="47" y="103"/><use href="#sl" x="66" y="103"/><use href="#sb" x="94" y="103"/><use href="#dn" x="117" y="103"/><use href="#po" x="138" y="103"/><use href="#dn" x="159" y="103"/><use href="#ng" x="186" y="103"/><use href="#ns" x="217" y="103"/><use href="#nt" x="246" y="103"/><use href="#bs" x="283" y="103"/><use href="#dn" x="305" y="103"/><use href="#bl" x="324" y="103"/><use href="#dn" x="346" y="103"/><use href="#bx" x="366" y="103"/><use href="#dn" x="388" y="103"/><use href="#bk" x="408" y="103"/><use href="#dn" x="430" y="103"/><use href="#gc" x="452" y="103"/><use href="#gl" x="485" y="103"/><use href="#dg" x="509" y="103"/><use href="#sp" x="534" y="103"/><use href="#ld" x="565" y="103"/><use href="#lf" x="595" y="103"/><use href="#l3" x="625" y="103"/><use href="#ci" x="653" y="103"/><use href="#dn" x="676" y="103"/><use href="#dq" x="691" y="103"/><use href="#dn" x="716" y="103"/><use href="#fu" x="752" y="103"/><use href="#gw2" x="788" y="103"/><use href="#fa" x="818" y="103"/><use href="#fm" x="846" y="103"/><use href="#br" x="882" y="103"/><use href="#gb2" x="912" y="103"/><use href="#gd" x="940" y="103"/><use href="#rc2" x="968" y="103"/><use href="#gy" x="996" y="103"/><use href="#w1" x="1036" y="103"/><use href="#w2" x="1064" y="103"/><use href="#w3" x="1092" y="103"/><use href="#w4" x="1121" y="103"/><use href="#w5" x="1151" y="103"/><use href="#w6" x="1179" y="103"/><use href="#sw" x="1207" y="103"/><use href="#pn" x="1236" y="103"/><use href="#ra" x="1272" y="103"/><use href="#dn" x="1293" y="103"/><use href="#dg1" x="1328" y="103"/><use href="#tg" x="1356" y="103"/><use href="#p1" x="1384" y="103"/><use href="#p2" x="1414" y="103"/><use href="#p3" x="1443" y="103"/><use href="#gn" x="1479" y="103"/><use href="#gr2" x="1507" y="103"/><use href="#gt" x="1535" y="103"/><use href="#xr" x="1565" y="103"/>
<!-- nav panel controls -->
<path d="M362 126V136H370V126zM364 126V123H373V132H370" fill="none" stroke="#333" stroke-width="1.200"/>
<path d="M383 127 392 136M392 127 383 136" stroke="#333" stroke-width="1.600"/>
<rect x="13" y="153" width="15" height="13" fill="#b0b0b0"/><path d="M13 161H28M13 158H22" stroke="#eee"/>
<path d="M344 156 350 162 356 156" fill="none" stroke="#bbb" stroke-width="1.200"/>
<path d="M372 156 367 160 372 164z" fill="#555"/><path d="M385 156 390 160 385 164z" fill="#555"/>
<!-- tree upper -->
<use href="#chd" x="15" y="193"/><use href="#c2k" x="35" y="193"/><use href="#fr" x="56" y="193"/>
<use href="#ro" x="57" y="213"/><circle cx="57" cy="213" r="3.800" fill="#333"/><use href="#fr" x="78" y="213"/>
<use href="#ro" x="57" y="233"/><use href="#fr" x="78" y="233"/>
<use href="#ro" x="57" y="253"/><use href="#fr" x="78" y="253"/>
<use href="#ro" x="57" y="273"/><use href="#fr" x="78" y="273"/>
<use href="#ro" x="57" y="293"/><use href="#fr" x="78" y="293"/>
<use href="#ro" x="57" y="313"/><use href="#fr" x="78" y="313"/>
<use href="#ro" x="57" y="333"/><use href="#fr" x="78" y="333"/>
<use href="#chr" x="15" y="353"/><use href="#c0" x="35" y="353"/><use href="#br" x="56" y="353"/>
<use href="#chr" x="15" y="373"/><use href="#c0" x="35" y="373"/><use href="#rc" x="56" y="373"/>
<use href="#chr" x="15" y="393"/><use href="#c1b" x="35" y="393"/><use href="#fr" x="56" y="393"/>
<!-- tree lower -->
<use href="#chr" x="15" y="787"/><use href="#c2k" x="35" y="787"/><use href="#xx" x="57" y="787"/>
<use href="#c2k" x="35" y="807"/><use href="#ey" x="57" y="807"/>
<use href="#c0" x="35" y="827"/><use href="#ey" x="57" y="827"/>
<use href="#chr" x="15" y="847"/><use href="#c1b" x="35" y="847"/><use href="#ey" x="57" y="847"/>
<use href="#chr" x="15" y="867"/><use href="#c1b" x="35" y="867"/><use href="#ey" x="57" y="867"/>
<use href="#chr" x="15" y="887"/><use href="#c1b" x="35" y="887"/><use href="#ey" x="57" y="887"/>
<use href="#chr" x="15" y="907"/><use href="#c1b" x="35" y="907"/><use href="#ey" x="57" y="907"/>
<use href="#chr" x="15" y="927"/><use href="#c1b" x="35" y="927"/><use href="#ey" x="57" y="927"/>
<use href="#chr" x="15" y="947"/><use href="#c1b" x="35" y="947"/><use href="#ey" x="57" y="947"/>
<use href="#chr" x="15" y="967"/><use href="#c1b" x="35" y="967"/><use href="#ey" x="57" y="967"/>
<use href="#chr" x="15" y="987"/><use href="#c1b" x="35" y="987"/><use href="#ey" x="57" y="987"/>
<use href="#chr" x="15" y="1007"/><use href="#c1b" x="35" y="1007"/><rect x="48" y="999" width="18" height="17" fill="url(#rain)"/>
<use href="#chr" x="15" y="1027"/><use href="#c0" x="35" y="1027"/><use href="#ey" x="57" y="1027"/>
<use href="#chr" x="15" y="1047"/><use href="#c1b" x="35" y="1047"/><use href="#ey" x="57" y="1047"/>
<use href="#chr" x="15" y="1067"/><use href="#c1b" x="35" y="1067"/><use href="#ey" x="57" y="1067"/>
<use href="#chr" x="15" y="1087"/><use href="#c1b" x="35" y="1087"/><use href="#ey" x="57" y="1087"/>
<!-- tabs -->
<path d="M16 1127H33V1141H16z" fill="#f0c040" stroke="#a08030"/><rect x="18" y="1127" width="16" height="5" fill="#3060b0"/><path d="M24 1134 33 1143 27 1142z" fill="#5090d0"/>
<ellipse cx="66" cy="1135" rx="7" ry="4.500" fill="#9aa6cc"/><circle cx="66" cy="1135" r="3" fill="#2a3a80"/>
<rect x="101" y="1130" width="12" height="10" rx="1.500" fill="#5a5a5a"/><path d="M113 1134 117 1131V1139L113 1136z" fill="#5a5a5a"/>
<path d="M143 1138V1141L152 1139V1136z" fill="#1a40a8"/><path d="M152 1136V1139L161 1137V1133z" fill="#d02020"/>
<!-- bottom toolbar -->
<use href="#ax" x="15" y="1166"/>
<path d="M171 1163 176 1168 181 1163" fill="none" stroke="#666" stroke-width="1.200"/>
<path stroke="#b8b8b8" d="M188.500 1156V1177M329.500 1156V1177M509.500 1156V1177M597.500 1156V1177"/>
<use href="#q1" x="205" y="1166"/><use href="#q2" x="232" y="1166"/><use href="#q3" x="258" y="1166"/><use href="#q4" x="286" y="1166"/><use href="#q5" x="312" y="1166"/>
<use href="#h1" x="347" y="1166"/><use href="#h2" x="373" y="1166"/><use href="#h3" x="400" y="1166"/><use href="#dn" x="419" y="1166"/><use href="#h4" x="439" y="1166"/><use href="#h5" x="467" y="1166"/><use href="#h6" x="493" y="1166"/>
<use href="#d1" x="526" y="1166"/><use href="#dn" x="545" y="1166"/><use href="#d2" x="568" y="1166"/><use href="#dn" x="587" y="1166"/>
<use href="#l1" x="614" y="1166"/><use href="#l2" x="641" y="1166"/><use href="#l4" x="668" y="1166"/><use href="#dn" x="687" y="1166"/><use href="#l5" x="710" y="1166"/><use href="#l5" x="734" y="1166"/><use href="#l6" x="762" y="1166"/><use href="#l7" x="788" y="1166"/><use href="#l6" x="816" y="1166"/><use href="#l8" x="842" y="1166"/>
<use href="#abb" x="970" y="1166.500"/><use href="#abb" x="1029" y="1166.500"/><use href="#abb" x="1104" y="1166.500"/><use href="#abb" x="1131" y="1166.500"/><use href="#abb" x="1158" y="1166.500"/><use href="#abb" x="1184" y="1166.500"/><use href="#abb" x="1477" y="1166.500"/><use href="#abb" x="1531" y="1166.500"/><use href="#abb" x="1557" y="1166.500"/><use href="#abb" x="1584" y="1166.500"/>
<use href="#gg" x="905" y="1166"/><use href="#gs" x="940" y="1166"/><use href="#gu" x="970" y="1166"/><use href="#gv" x="1002" y="1166"/><use href="#gz" x="1029" y="1166"/><use href="#aL" x="1067" y="1166"/><use href="#mA" x="1104" y="1166"/><use href="#mB" x="1131" y="1166"/><use href="#mC" x="1158" y="1166"/><use href="#mD" x="1184" y="1166"/><use href="#mE" x="1210" y="1166"/><use href="#mF" x="1235" y="1166"/><use href="#mG" x="1262" y="1166"/><use href="#mH" x="1289" y="1166"/><use href="#mI" x="1316" y="1166"/><use href="#mJ" x="1343" y="1166"/><use href="#mK" x="1369" y="1166"/><use href="#mL" x="1396" y="1166"/><use href="#mM" x="1422" y="1166"/><use href="#mN" x="1449" y="1166"/><use href="#mO" x="1477" y="1166"/><use href="#mP" x="1503" y="1166"/><use href="#mQ" x="1531" y="1166"/><use href="#mR" x="1557" y="1166"/><use href="#mS" x="1584" y="1166"/>
<!-- status separators -->
<path stroke="#d0d0dc" d="M905.500 1181V1198M1024.500 1181V1198M1252.500 1181V1198M1325.500 1181V1198M1409.500 1181V1198M1493.500 1181V1198M1578.500 1181V1198"/>
<g fill="#aaa"><rect x="1591" y="1188" width="2" height="2"/><rect x="1591" y="1192" width="2" height="2"/><rect x="1587" y="1192" width="2" height="2"/></g>

<!-- 3D STRUCTURE -->
<g style="filter:blur(.45px)">
<use href="#column"/><use href="#column" x="243" y="36"/><use href="#column" x="493" y="74"/><use href="#column" x="743" y="111"/>
<!-- X bracing (zoom coords) -->
<g transform="translate(860 490) scale(.33333)" fill="none" stroke-width="8">
<path d="M415 30 510 85" stroke="#b4ac00"/><path d="M510 85 625 147" stroke="#d8d800"/>
<path d="M665 175 760 265" stroke="#00d870"/><path d="M760 265 850 350" stroke="#00c078"/>
<path d="M1140 145 760 168" stroke="#d8d800" stroke-width="7"/>
<path d="M660 178 380 215" stroke="#00d800" stroke-width="7"/>
<path d="M530 185 320 205" stroke="#00c078" stroke-width="7"/>
<path d="M300 228 160 245" stroke="#00c078" stroke-width="7"/>
<path d="M250 275 850 355" stroke="#00c078" stroke-width="11"/>
<path d="M150 285 800 385" stroke="#00c078" stroke-width="11"/>
<path d="M50 295 270 410 320 450" stroke="#00c078"/>
<path d="M320 450 430 510" stroke="#00d800"/><path d="M430 510 510 550" stroke="#d8d800"/>
<path d="M110 258 275 410" stroke="#00c078"/>
<path d="M-75 462 90 450" stroke="#d8d800" stroke-width="7"/>
<path d="M90 450 255 440" stroke="#00d800" stroke-width="7"/>
<path d="M255 440 670 392" stroke="#00c078" stroke-width="7"/>
</g>
<!-- beam A -->
<g class="s" clip-path="url(#ca)">
<rect x="675" width="38" fill="#d80000"/><rect x="712" width="62" fill="#d89000"/><rect x="773" width="41" fill="#d80000"/><rect x="813" width="116" fill="#9e0000"/><rect x="928" width="32" fill="#d80000"/><rect x="959" width="85" fill="#d89000"/><rect x="1043" width="35" fill="#d80000"/><rect x="1077" width="96" fill="#9e0000"/><rect x="1172" width="35" fill="#d80000"/><rect x="1206" width="81" fill="#d89000"/><rect x="1286" width="32" fill="#d80000"/><rect x="1317" width="100" fill="#9e0000"/><rect x="1416" width="25" fill="#d80000"/><rect x="1440" width="22" fill="#d89000"/><rect x="1461" width="24" fill="#b4ac00"/><rect x="1484" width="33" fill="#d8d800"/><rect x="1516" width="16" fill="#00d800"/>
</g>
<!-- rafters -->
<use href="#rafter"/><use href="#rafter" x="243" y="36"/><use href="#rafter" x="495" y="73"/>
<g fill="none">
<path d="M1405 712 1418 685" stroke="#00b0d8" stroke-width="4.500"/><path d="M1418 685 1438 650" stroke="#10c8e0" stroke-width="4.500"/><path d="M1438 650 1463 608" stroke="#00c078" stroke-width="4.500"/>
<path d="M1325 703 1355 713" stroke="#00b080" stroke-width="3.500"/><path d="M1355 713 1389 724" stroke="#10c8e0" stroke-width="3.500"/>
<path d="M1300 714 1327 697" stroke="#00c078" stroke-width="7"/><path d="M1327 697 1448 610" stroke="#00b874" stroke-width="8"/><path d="M1448 610 1488 582" stroke="#00c800" stroke-width="8"/><path d="M1486 583 1496 576" stroke="#c0b400" stroke-width="7"/>
</g>
<!-- beams -->
<g class="s" clip-path="url(#cb2)">
<rect x="635" width="14" fill="#d8d800"/><rect x="648" width="92" fill="#00d800"/><rect x="739" width="165" fill="#d8d800"/><rect x="903" width="364" fill="#00d800"/><rect x="1266" width="102" fill="#d8d800"/><rect x="1367" width="57" fill="#00d800"/><rect x="1423" width="68" fill="#00c078"/>
</g>
<polygon points="594,506 1449,633 1449,647 594,520" fill="#00c078"/>
<polygon points="553,535 1409,663 1409,677 553,549" fill="#00c078"/>
<g class="s" clip-path="url(#ce)"><rect x="513" width="15" fill="#00d800"/><rect x="527" width="842" fill="#00c078"/></g>
<g class="s" clip-path="url(#cf)">
<rect x="472" width="135" fill="#b4ac00"/><rect x="606" width="111" fill="#d89000"/><rect x="716" width="413" fill="#b4ac00"/><rect x="928" width="1" fill="#d89000"/><rect x="1128" width="59" fill="#d89000"/><rect x="1186" width="54" fill="#b4ac00"/><rect x="1239" width="40" fill="#d8d800"/><rect x="1278" width="50" fill="#00d800"/>
</g>
<use href="#plates"/><use href="#plates" x="243" y="36"/><use href="#plates" x="495" y="73"/>
<path d="M1478 590 1490 581 1492 586 1481 595z" fill="#00d800"/>
<path d="M1488 583 1497 575 1498 580 1491 587z" fill="#c0b400"/>
</g>

<!-- cube -->
<g transform="translate(1440 130) scale(.33333)" style="filter:blur(.6px)">
<polygon points="93,95 205,42 408,72 295,122" fill="#8c8c8c"/>
<polygon points="93,95 295,122 295,345 93,315" fill="#c8c8c8"/>
<polygon points="295,122 408,72 408,285 295,345" fill="#a8a8a8"/>
<g stroke="#7a7a7a" stroke-width="8" fill="none">
<path d="M93 95 295 122 408 72M295 122V345"/>
<path d="M143 102V322M240 115V336M93 150 295 180M93 262 295 292"/>
<path d="M322 110V332M378 86V302M295 180 408 130M295 292 408 240"/>
<path d="M150 68 350 95M250 52 130 105" stroke="#6e6e6e" stroke-width="5" opacity=".6"/>
</g>
<ellipse cx="255" cy="88" rx="20" ry="6" fill="#5a6a9c"/>
</g>
</svg>

<!-- texts -->
<div class="t" style="left:33px;top:7px;color:#fff;font-size:12.7px">Dlubal RFEM | 6.09.0002 | Ombrière (25.69 ml x 12.36 ml) v2.rf6</div>
<div class="t" style="left:28px;top:36px">Fichier</div><div class="t" style="left:84px;top:36px">Modifier</div><div class="t" style="left:150px;top:36px">Affichage</div><div class="t" style="left:222px;top:36px">Insérer</div><div class="t" style="left:279px;top:36px">Assigner</div><div class="t" style="left:346px;top:36px">Calculer</div><div class="t" style="left:409px;top:36px;letter-spacing:-.2px">Résultats</div><div class="t" style="left:479px;top:36px">Outils</div><div class="t" style="left:531px;top:36px;letter-spacing:.2px">Options</div><div class="t" style="left:596px;top:36px;letter-spacing:-.1px">Fenêtre</div><div class="t" style="left:657px;top:36px;letter-spacing:-.7px">CAO-BIM</div><div class="t" style="left:726px;top:36px">Aide</div>
<div class="t" style="left:975px;top:36px;color:#777;font-size:12.7px">Entrez un mot-clé (Alt+Q)</div>
<div class="t" style="left:1407px;top:36px;font-size:12.5px">Dlubal Software SARL</div>
<div class="t" style="left:781px;top:62px;color:#f4e0e0;font-size:12px">ELU</div>
<div class="t" style="left:815px;top:62px;font-size:12px;letter-spacing:-.5px">SP1</div>
<div class="t" style="left:892px;top:62px;font-size:12px;letter-spacing:-.3px">ELU (STR/GEO) - Permane...</div>
<div class="t" style="left:1585px;top:61px;color:#555">»</div>
<div class="t" style="left:1585px;top:92px;color:#555">»</div>
<div class="t" style="left:8px;top:121px;font-weight:700;color:#2a3340">Navigateur - Résultats</div>
<div class="t" style="left:33px;top:150px;color:#8f8f8f">Analyse statique</div>
<div class="t" style="left:71px;top:183px">Déformations globales</div>
<div class="t" style="left:94px;top:203px">|u|</div>
<div class="t" style="left:94px;top:223px">u<small>X</small></div>
<div class="t" style="left:94px;top:243px">u<small>Y</small></div>
<div class="t" style="left:94px;top:263px">u<small>Z</small></div>
<div class="t" style="left:94px;top:283px">φ<small>X</small></div>
<div class="t" style="left:94px;top:303px">φ<small>Y</small></div>
<div class="t" style="left:94px;top:323px">φ<small>Z</small></div>
<div class="t" style="left:71px;top:343px">Barres</div>
<div class="t" style="left:71px;top:363px;letter-spacing:-.1px">Réactions d'appui</div>
<div class="t" style="left:71px;top:383px">Valeurs d'enveloppe</div>
<div class="t" style="left:71px;top:778px;letter-spacing:-.15px">Valeurs des résultats</div>
<div class="t" style="left:71px;top:798px;letter-spacing:.1px">Informations sur le titre</div>
<div class="t" style="left:71px;top:818px">Informations max/min</div>
<div class="t" style="left:71px;top:838px">Déformation</div>
<div class="t" style="left:71px;top:858px">Lignes</div>
<div class="t" style="left:71px;top:878px">Barres</div>
<div class="t" style="left:71px;top:898px">Surfaces</div>
<div class="t" style="left:71px;top:918px">Solides</div>
<div class="t" style="left:71px;top:938px">Assemblages soudés</div>
<div class="t" style="left:71px;top:958px">Valeurs sur les surfaces</div>
<div class="t" style="left:71px;top:978px">Cotation</div>
<div class="t" style="left:71px;top:998px">Type d'affichage</div>
<div class="t" style="left:71px;top:1018px;letter-spacing:-.06px">Nervures - Contribution efficace sur la surface/barre</div>
<div class="t" style="left:71px;top:1038px;letter-spacing:-.1px">Réactions d'appui</div>
<div class="t" style="left:71px;top:1058px">Coupes de résultats</div>
<div class="t" style="left:71px;top:1078px">Plans de coupe</div>
<div class="t" style="left:53px;top:1156px;letter-spacing:-.5px">1 - Global XYZ</div>
<div class="t" style="left:864px;top:1155px;color:#555">»</div>
<div class="t" style="left:1028px;top:1179px;letter-spacing:-.75px">SC : Global XYZ</div>
<div class="t" style="left:1257px;top:1179px;letter-spacing:-.85px">Plan : XY</div>
<div class="t" style="left:410px;top:123px;letter-spacing:-.2px">SP1 - ELU (STR/GEO) - Permanent et transitoire - Éq. 6.10</div>
<div class="t" style="left:410px;top:142px">Analyse statique</div>
<div class="t" style="right:7px;top:1129px;letter-spacing:.2px">Cotations [deg]</div>
<div class="t" style="left:1494px;top:194px;font-size:16px;font-weight:700;color:#3cb84a;-webkit-text-stroke:.3px #3cb84a">+Y</div>
<div class="t" style="left:1550px;top:192px;font-size:13px;font-weight:700;color:#c84848;transform:skewY(-22deg)">-X</div>
</body></html>
